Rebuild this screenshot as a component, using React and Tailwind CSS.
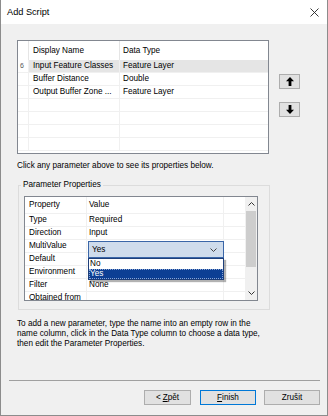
import React from 'react'

const listRows = [
    {name: 'Input Feature Classes', type: 'Feature Layer', sel: true},
    {name: 'Buffer Distance', type: 'Double'},
    {name: 'Output Buffer Zone ...', type: 'Feature Layer'},
    {name: '', type: ''},
    {name: '', type: ''},
    {name: '', type: ''},
    {name: '', type: ''},
]

const props = [
    ['Type', 'Required'],
    ['Direction', 'Input'],
    ['MultiValue', ''],
    ['Default', ''],
    ['Environment', ''],
    ['Filter', 'None'],
    ['Obtained from', ''],
]

const Arrow = ({down}) => (
    <svg width="8" height="9" viewBox="0 0 8 9" className={down ? 'rotate-180' : ''}>
        <path d="M4 0 L8 4.2 H5.4 V9 H2.6 V4.2 H0 Z" fill="#000"/>
    </svg>
)

const Chevron = ({up, color = '#444'}) => (
    <svg width="7" height="4" viewBox="0 0 7 4" className={up ? 'rotate-180' : ''}>
        <polyline points="0.5,0.5 3.5,3.5 6.5,0.5" fill="none" stroke={color} strokeWidth="1"/>
    </svg>
)

const Button = ({children, w, def}) => (
    <div className={`${w} h-[15px] flex items-center justify-center bg-[#e1e1e1] border ${def ? 'border-[#0078d7]' : 'border-[#adadad]'}`}>
        {children}
    </div>
)

const App = () => {
    return (
        <div className="w-[328px] h-[416px] flex flex-col bg-[#f0f0f0] border-x border-b border-[#8c8c8c] text-black font-['Liberation_Sans',Arial,sans-serif] text-[8.2px] leading-[10px]">
            {/* title bar */}
            <div className="h-[24px] bg-white flex items-center justify-between pl-[6px] pr-[8px]">
                <span className="text-[9.2px]">Add Script</span>
                <svg width="9" height="9" viewBox="0 0 9 9">
                    <path d="M0.5 0.5 L8.5 8.5 M8.5 0.5 L0.5 8.5" stroke="#222" strokeWidth="0.9"/>
                </svg>
            </div>

            <div className="flex flex-col pl-[16px] pt-[16px]">
                {/* parameter list + move buttons */}
                <div className="flex items-start">
                    <div className="w-[252px] h-[114px] border border-[#828790] bg-white overflow-hidden">
                        <div className="flex h-[19px] items-center">
                            <div className="w-[11px] h-full border-r border-[#e5e5e5]"/>
                            <div className="w-[91px] h-full pl-[4px] flex items-center border-r border-[#e5e5e5]">Display Name</div>
                            <div className="flex-1 pl-[3px]">Data Type</div>
                        </div>
                        {listRows.map((r, i) => (
                            <div key={i} className="flex h-[13px] border-b border-[#f0f0f0]">
                                <div className="w-[11px] h-full border-r border-[#f0f0f0] flex items-center pl-[2px] text-[7px] text-[#555]">
                                    {r.sel ? '6' : ''}
                                </div>
                                <div className={`flex flex-1 ${r.sel ? 'bg-[#e5e5e5]' : ''}`}>
                                    <div className="w-[91px] h-full pl-[4px] flex items-center border-r border-[#f0f0f0] whitespace-nowrap">{r.name}</div>
                                    <div className="flex-1 pl-[3px] flex items-center whitespace-nowrap">{r.type}</div>
                                </div>
                            </div>
                        ))}
                    </div>
                    <div className="ml-[10px] pt-[34px] flex flex-col gap-[13px]">
                        <Button w="w-[21px]"><Arrow/></Button>
                        <Button w="w-[21px]"><Arrow down/></Button>
                    </div>
                </div>

                <div className="mt-[7px]">Click any parameter above to see its properties below.</div>

                {/* parameter properties group */}
                <fieldset className="mt-[9px] ml-[1px] w-[252px] h-[130px] border border-[#dcdcdc]">
                    <legend className="ml-[2px] px-[2px]">Parameter Properties</legend>
                    <div className="pt-[6px] pl-[5px]">
                        <div className="w-[234px] h-[105px] border border-[#828790] bg-white flex overflow-hidden">
                            <div className="w-[220px] relative">
                                <div className="flex h-[17px] border-b border-[#f0f0f0]">
                                    <div className="w-[62px] pl-[4px] flex items-center border-r border-[#f0f0f0]">Property</div>
                                    <div className="w-[137px] pl-[2px] flex items-center border-r border-[#f0f0f0]">Value</div>
                                    <div className="flex-1"/>
                                </div>
                                {props.map(([k, v]) => (
                                    <div key={k} className="flex h-[13px] border-b border-[#f0f0f0]">
                                        <div className="w-[62px] pl-[4px] flex items-center border-r border-[#f0f0f0] whitespace-nowrap">{k}</div>
                                        <div className="w-[137px] pl-[2px] flex items-center border-r border-[#f0f0f0]">{v}</div>
                                        <div className="flex-1"/>
                                    </div>
                                ))}

                                {/* open combobox */}
                                <div className="absolute left-[63px] top-[44px] w-[136px] h-[17px] bg-[#cfdcec] border border-[#3a66a8] flex items-center justify-between pl-[3px] pr-[6px]">
                                    <span>Yes</span>
                                    <Chevron/>
                                </div>
                                <div className="absolute left-[63px] top-[61px] w-[136px] border border-[#1e3f7a] bg-white shadow-[2px_2px_1px_rgba(0,0,0,0.3)]">
                                    <div className="h-[10px] pl-[1px] flex items-center">No</div>
                                    <div className="h-[10px] pl-[1px] flex items-center bg-[#0c3f94] text-white outline outline-1 outline-dotted outline-[#8aa6d6] -outline-offset-1">Yes</div>
                                </div>
                            </div>
                            {/* scrollbar */}
                            <div className="w-[12px] bg-[#f0f0f0] flex flex-col">
                                <div className="h-[14px] flex items-center justify-center"><Chevron up color="#333"/></div>
                                <div className="h-[56px] mx-[1px] bg-[#cdcdcd]"/>
                                <div className="flex-1"/>
                                <div className="h-[14px] flex items-center justify-center"><Chevron color="#333"/></div>
                            </div>
                        </div>
                    </div>
                </fieldset>

                <div className="mt-[9px]">
                    <div>To add a new parameter, type the name into an empty row in the</div>
                    <div>name column, click in the Data Type column to choose a data type,</div>
                    <div>then edit the Parameter Properties.</div>
                </div>
            </div>

            <div className="mt-[31px] ml-[8px] w-[311px] h-px bg-[#a0a0a0]"/>

            <div className="mt-[9px] flex justify-end pr-[7px]">
                <Button w="w-[47px]">&lt; <span className="underline ml-[2px]">Z</span>pět</Button>
                <div className="ml-[9px]">
                    <Button w="w-[56px]" def><span className="underline">F</span>inish</Button>
                </div>
                <div className="ml-[8px]">
                    <Button w="w-[56px]">Zrušit</Button>
                </div>
            </div>
        </div>
    )
}

export default App
